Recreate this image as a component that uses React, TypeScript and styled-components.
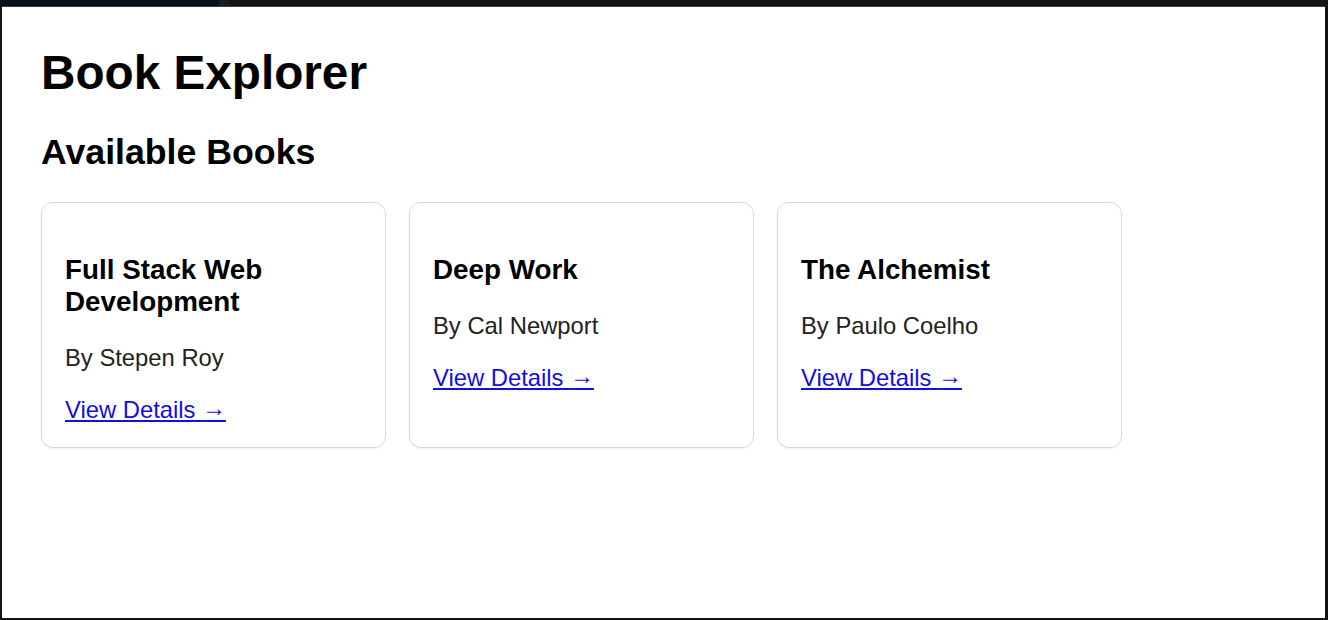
import React from "react";
import styled, { createGlobalStyle } from "styled-components";

const GlobalStyle = createGlobalStyle`
  html, body {
    margin: 0;
    padding: 0;
    background: #141410;
  }
  body {
    font-family: "Liberation Sans", Arial, sans-serif;
  }
`;

const Frame = styled.div`
  height: 620px;
  display: flex;
  flex-direction: column;
  background: #141410;
  overflow: hidden;
`;

const TopStrip = styled.div`
  height: 6px;
  display: flex;
  flex-shrink: 0;
`;

const StripSegment = styled.div<{ $tone: string; $width?: string }>`
  background: ${(p) => p.$tone};
  width: ${(p) => p.$width || "auto"};
  flex: ${(p) => (p.$width ? "0 0 auto" : "1 1 auto")};
`;

const Panel = styled.main`
  flex: 1;
  margin: 0 3px 2px 2px;
  background: #ffffff;
  border-top: 1px solid #3a3d40;
  padding: 0 39px;
  box-sizing: border-box;
  color: #000;
`;

const Title = styled.h1`
  font-size: 47.7px;
  line-height: 55px;
  font-weight: 700;
  margin: 38px 0 0;
`;

const SectionTitle = styled.h2`
  font-size: 35.7px;
  line-height: 41px;
  font-weight: 700;
  margin: 32px 0 0;
`;

const Grid = styled.div`
  display: grid;
  grid-template-columns: repeat(3, 345px);
  column-gap: 23px;
  margin-top: 29px;
`;

const Card = styled.article`
  border: 1px solid #dadada;
  border-radius: 12px;
  padding: 51px 23px 23px;
  box-shadow: 0 1px 2px rgba(0, 0, 0, 0.05);
  background: #fff;
`;

const BookTitle = styled.h3`
  font-size: 27.8px;
  line-height: 32px;
  font-weight: 700;
  margin: 0;
  color: #000;
`;

const Author = styled.p`
  font-size: 23.8px;
  line-height: 28px;
  margin: 26px 0 0;
  color: #222;
`;

const DetailsLink = styled.a`
  display: inline-block;
  font-size: 23.8px;
  line-height: 28px;
  margin-top: 22px;
  color: #1010e0;
  text-decoration: underline;
`;

const Arrow = styled.span`
  vertical-align: 2px;
`;

const books = [
  { title: "Full Stack Web Development", author: "Stepen Roy" },
  { title: "Deep Work", author: "Cal Newport" },
  { title: "The Alchemist", author: "Paulo Coelho" },
];

export default function App() {
  return (
    <>
      <GlobalStyle />
      <Frame>
        <TopStrip>
          <StripSegment $tone="#07111e" $width="219px" />
          <StripSegment $tone="#1b1b17" $width="10px" />
          <StripSegment $tone="#14150f" />
        </TopStrip>
        <Panel>
          <Title>Book Explorer</Title>
          <SectionTitle>Available Books</SectionTitle>
          <Grid>
            {books.map((b) => (
              <Card key={b.title}>
                <BookTitle>{b.title}</BookTitle>
                <Author>By {b.author}</Author>
                <DetailsLink href="#">
                  View Details <Arrow>→</Arrow>
                </DetailsLink>
              </Card>
            ))}
          </Grid>
        </Panel>
      </Frame>
    </>
  );
}
